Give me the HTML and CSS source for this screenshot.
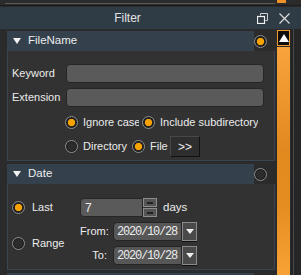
FILE: index.html
```html
<!DOCTYPE html>
<html lang="en">
<head>
    <meta charset="UTF-8">
    <title>Filter</title>
    <link rel="stylesheet" href="styles.css">
</head>
<body>
    <div class="top-strip">
        <div class="top-line"></div>
        <div class="top-thumb"></div>
    </div>

    <header class="titlebar">
        <span class="title">Filter</span>
        <div class="title-icons">
            <svg width="11" height="11" viewBox="0 0 11 11">
                <path d="M3.5 2.5v-2h7v7h-2" fill="none" stroke="#cfcfcf"/>
                <rect x="0.5" y="3.5" width="7" height="7" fill="none" stroke="#f2f2f2" stroke-width="1.2"/>
            </svg>
            <svg width="11" height="11" viewBox="0 0 11 11">
                <path d="M0.5 0.5l10 10M10.5 0.5l-10 10" stroke="#dcdcdc" stroke-width="1.2"/>
            </svg>
        </div>
    </header>

    <div class="main">
        <div class="panels">
            <!-- FileName -->
            <section class="group">
                <div class="group-head">
                    <div class="group-bar"><span class="caret"></span>FileName</div>
                    <span class="radio on"></span>
                </div>
                <div class="group-body filename-body">
                    <div class="field-row">
                        <label>Keyword</label>
                        <div class="input"></div>
                    </div>
                    <div class="field-row">
                        <label>Extension</label>
                        <div class="input"></div>
                    </div>
                    <div class="opt-row">
                        <span class="radio on"></span>
                        <span class="opt-label lbl-ignore">Ignore case</span>
                        <span class="radio on"></span>
                        <span class="opt-label">Include subdirectory</span>
                    </div>
                    <div class="opt-row row-two">
                        <span class="radio"></span>
                        <span class="opt-label lbl-dir">Directory</span>
                        <span class="radio on"></span>
                        <span class="opt-label lbl-file">File</span>
                        <button class="btn">&gt;&gt;</button>
                    </div>
                </div>
            </section>

            <!-- Date -->
            <section class="group">
                <div class="group-head">
                    <div class="group-bar"><span class="caret"></span>Date</div>
                    <span class="radio"></span>
                </div>
                <div class="group-body date-body">
                    <div class="choice">
                        <span class="radio on"></span>
                        <span>Last</span>
                    </div>
                    <div class="last-row">
                        <div class="num-input">7</div>
                        <div class="spin">
                            <span class="spin-btn up"></span>
                            <span class="spin-btn down"></span>
                        </div>
                        <span class="unit">days</span>
                    </div>
                    <div class="choice range">
                        <span class="radio"></span>
                        <span>Range</span>
                    </div>
                    <div class="date-row">
                        <span class="date-label">From:</span>
                        <div class="date-box">2020/10/28</div>
                        <span class="drop"></span>
                    </div>
                    <div class="date-row">
                        <span class="date-label">To:</span>
                        <div class="date-box">2020/10/28</div>
                        <span class="drop"></span>
                    </div>
                </div>
            </section>

            <section class="group">
                <div class="group-head">
                    <div class="group-bar"></div>
                </div>
            </section>
        </div>

        <div class="scroll">
            <div class="scroll-up"></div>
            <div class="scroll-track"></div>
        </div>
        <div class="edge"></div>
    </div>
</body>
</html>
```

FILE: styles.css
```css
* {
    margin: 0;
    padding: 0;
    box-sizing: border-box;
}

:root {
    --bar: #2f3b45;
    --head: #34414c;
    --panel: #323232;
    --field: #5a5a5a;
    --text: #ececec;
    --orange: #f6a200;
}

body {
    width: 301px;
    height: 275px;
    overflow: hidden;
    background: #2b2b2b;
    color: var(--text);
    font-family: "Liberation Sans", Arial, sans-serif;
    font-size: 11px;
    line-height: 1;
}

/* strip of the panel above */
.top-strip {
    height: 7px;
    display: flex;
    align-items: flex-start;
    background: linear-gradient(#2b2b2b 0 5px, #1c1c1c 5px 6px, #2b2b2b 6px);
}

.top-line {
    flex: 1;
    height: 4px;
    margin: 0 2px 0 5px;
    border-bottom: 1px solid #5c5c5c;
}

.top-thumb {
    width: 9px;
    height: 3px;
    background: #f0922a;
    margin-right: 15px;
}

.titlebar {
    height: 22px;
    background: var(--bar);
    display: flex;
    align-items: center;
}

.title {
    flex: 1;
    text-align: center;
    font-size: 12px;
    color: #e2e2e2;
}

.title-icons {
    width: 46px;
    display: flex;
    gap: 11px;
    padding-left: 2px;
}

.title-icons svg {
    display: block;
}

.main {
    display: flex;
    height: 246px;
    overflow: hidden;
}

.panels {
    width: 275px;
    padding: 2px 0 0 7px;
    display: flex;
    flex-direction: column;
    gap: 3px;
    overflow: hidden;
}

.group {
    flex-shrink: 0;
}

.group-head {
    height: 20px;
    display: flex;
    align-items: center;
}

.group-bar {
    width: 247px;
    height: 20px;
    background: var(--head);
    display: flex;
    align-items: center;
    gap: 7px;
    padding-left: 6px;
    font-size: 11.5px;
}

.caret {
    width: 0;
    height: 0;
    border-left: 4px solid transparent;
    border-right: 4px solid transparent;
    border-top: 6px solid #f2f2f2;
}

.radio {
    width: 13px;
    height: 13px;
    border-radius: 50%;
    border: 1px solid #8e8e8e;
    background: #2c2c2c;
    box-shadow: inset 0 0 0 1px #1c1c1c;
    flex-shrink: 0;
}

.radio.on {
    background: radial-gradient(circle, var(--orange) 0 3.3px, #262626 4px);
}

.group-body {
    background: var(--panel);
    border: 1px solid #394651;
    border-top: 0;
}

.filename-body {
    height: 110px;
    padding: 13px 0 0 4px;
}

.field-row {
    display: flex;
    align-items: center;
    height: 19px;
    margin-bottom: 5px;
}

.field-row label {
    width: 54px;
}

.input {
    width: 198px;
    height: 19px;
    background: var(--field);
    border: 1px solid #262626;
    border-radius: 4px;
}

.opt-row {
    display: flex;
    align-items: center;
    height: 20px;
    margin-left: 53px;
    white-space: nowrap;
}

.opt-row.row-two {
    height: 21px;
    margin-top: 4px;
}

.opt-label {
    margin-left: 5px;
    overflow: hidden;
}

.lbl-ignore {
    width: 56px;
    margin-right: 3px;
}

.lbl-dir {
    width: 45px;
    margin-right: 4px;
}

.lbl-file {
    width: 18px;
}

.btn {
    width: 30px;
    height: 21px;
    margin-left: 2px;
    background: #2e2e2e;
    border: 1px solid;
    border-color: #474747 #111 #111 #474747;
    color: #eee;
    font-family: "Liberation Sans", Arial, sans-serif;
    font-size: 12px;
}

/* Date */
.date-body {
    height: 86px;
    padding: 14px 0 0 4px;
    display: grid;
    grid-template-columns: 68px auto;
    grid-template-rows: 19px 19px 19px;
    row-gap: 5px;
}

.choice {
    display: flex;
    align-items: center;
    gap: 7px;
}

.choice.range {
    grid-row: 2 / 4;
}

.last-row,
.date-row {
    display: flex;
    align-items: center;
}

.num-input {
    width: 63px;
    height: 19px;
    background: var(--field);
    border: 1px solid #262626;
    border-radius: 4px 0 0 4px;
    padding: 3px 0 0 4px;
    font-size: 12px;
}

.spin {
    display: flex;
    flex-direction: column;
    gap: 1px;
}

.spin-btn {
    width: 14px;
    height: 9px;
    border: 1px solid #8c8c8c;
    background: #545454;
    display: flex;
    align-items: center;
    justify-content: center;
}

.spin-btn::after {
    content: '';
    width: 6px;
    height: 2px;
    background: #222;
}

.unit {
    margin-left: 6px;
    font-size: 11.5px;
}

.date-label {
    width: 27px;
    text-align: right;
    margin-right: 6px;
}

.date-box {
    width: 69px;
    height: 19px;
    background: #575757;
    border: 1px solid #242424;
    border-radius: 4px 0 0 4px;
    padding: 3px 0 0 3px;
    font-family: "Liberation Mono", monospace;
    font-size: 12px;
    letter-spacing: -1.2px;
}

.drop {
    width: 15px;
    height: 19px;
    border: 1px solid #8a8a8a;
    background: #4a4a4a;
    box-shadow: 0 1px 0 #111;
    display: flex;
    align-items: center;
    justify-content: center;
}

.drop::after {
    content: '';
    border-left: 4px solid transparent;
    border-right: 4px solid transparent;
    border-top: 5px solid #f0f0f0;
}

/* scrollbar */
.scroll {
    width: 16px;
    padding: 1px 0 0 2px;
    display: flex;
    flex-direction: column;
}

.scroll-up {
    width: 13px;
    height: 16px;
    border: 1px solid #f39a2c;
    background: #0e0e0e;
    display: flex;
    align-items: center;
    justify-content: center;
}

.scroll-up::after {
    content: '';
    border-left: 5px solid transparent;
    border-right: 5px solid transparent;
    border-bottom: 8px solid #fafafa;
}

.scroll-track {
    flex: 1;
    width: 13px;
    margin-top: 1px;
    background: linear-gradient(#f8a33c, #e2891f 45%, #e68d22 70%, #f7a236);
}

.edge {
    width: 10px;
    background: linear-gradient(to right, #232323 0 2px, #4a4a4a 2px 3px, #262626 3px);
}
```
